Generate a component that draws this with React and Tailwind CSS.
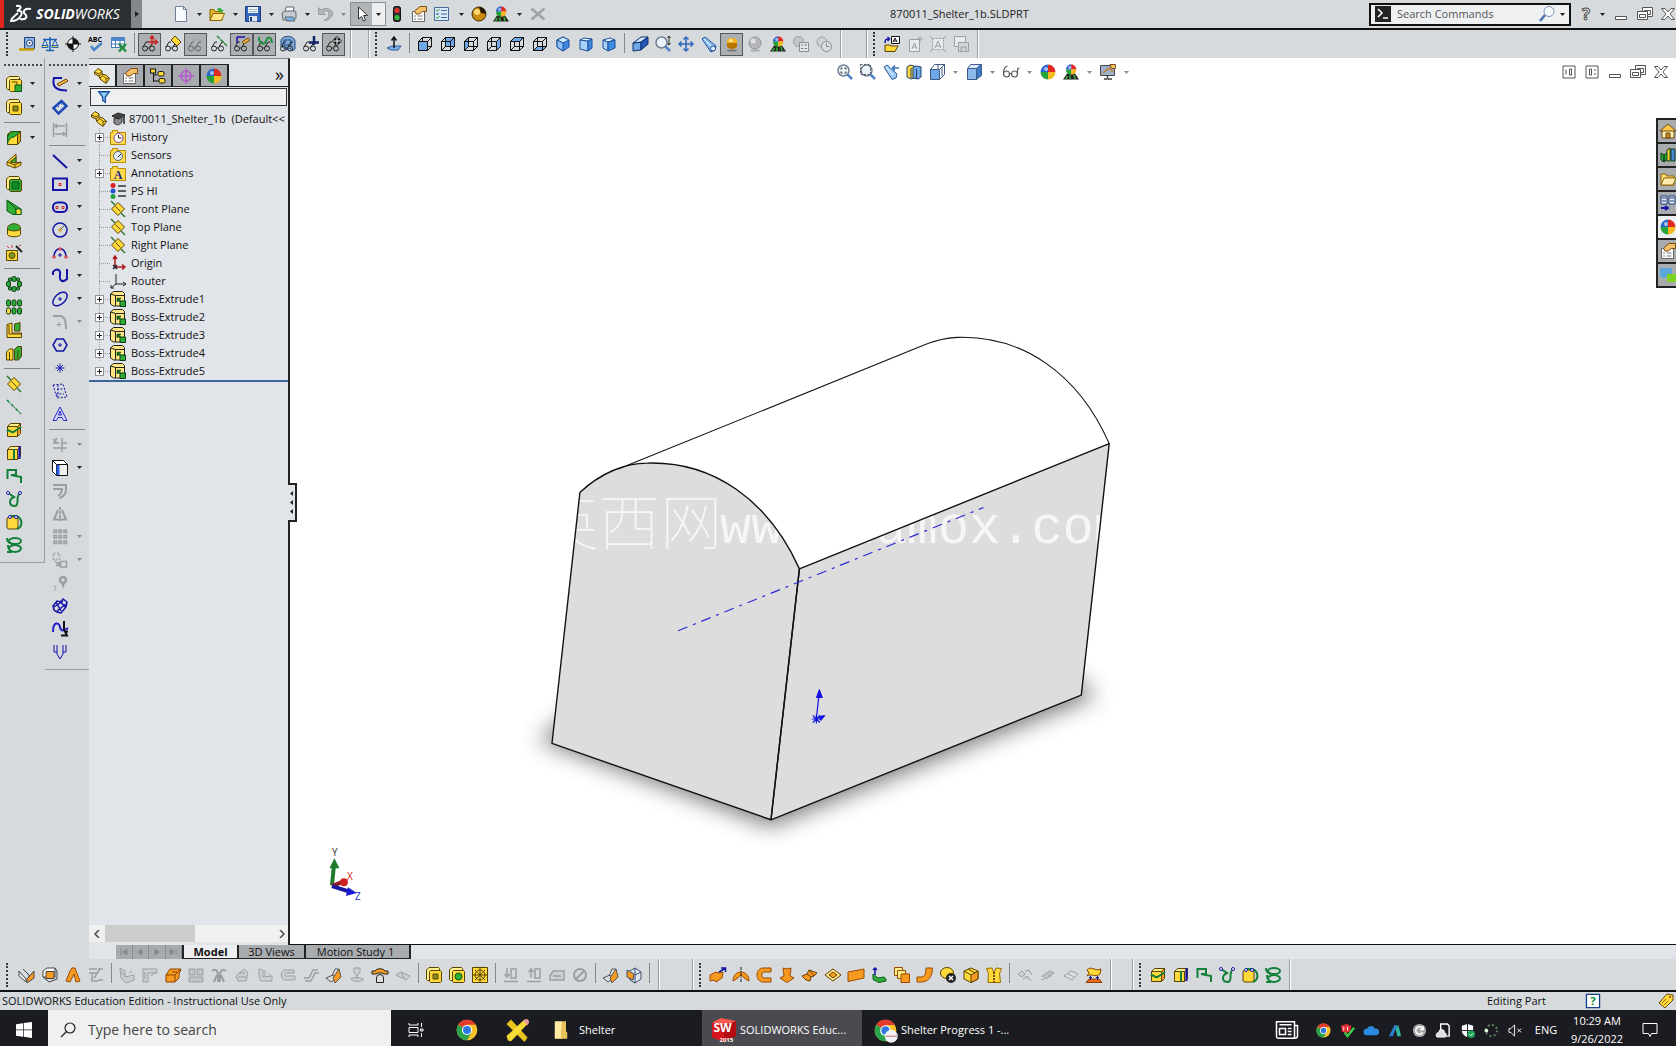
import { useState } from "react";

const Y = "#ffd83a";
const YL = "#fff08a";
const G = "#2fae35";
const DG = "#13803a";
const O = "#f79a1f";
const BR = "#5a4300";
const B = "#1414a8";
const GR = "#9b9fa3";
const BL = "#6ea8e6";

/* small shared shapes, all on a 16x16 grid */
const Box = ({ f = Y, t = YL, s = "#d9a800", k = BR }) => (
  <g stroke={k} strokeLinejoin="round">
    <path d="M1.5 4.5h10v10h-10z" fill={f} />
    <path d="M1.5 4.5l3-3h10l-3 3z" fill={t} />
    <path d="M14.5 1.5v10l-3 3v-10z" fill={s} />
  </g>
);

/* two stacked rounded plates, the base of most feature icons */
const Plates = ({ f = Y }) => (
  <g stroke={BR} strokeLinejoin="round">
    <path d="M.5 3L3 .5h9.500l1 1v9.500L11 13.500H1.500l-1-1z" fill={YL} />
    <path d="M3.500 4.500l1-1h10l1 1v10l-1 1h-10l-1-1z" fill={f} />
  </g>
);

const WireBox = ({ front = "none", top = "none", side = "none", back = "none", left = "none", bottom = "none" }) => (
  <g stroke="#111" strokeLinejoin="round">
    <path d="M5.5 1.5h9v9h-9z" fill={back} />
    <path d="M1.5 5.5l4-4v9l-4 4z" fill={left} />
    <path d="M1.5 14.5l4-4h9l-4 4z" fill={bottom} />
    <path d="M1.5 5.5h9v9h-9z" fill={front} />
    <path d="M1.5 5.5l4-4h9l-4 4z" fill={top} />
    <path d="M14.5 1.5v9l-4 4v-9z" fill={side} />
  </g>
);

const IsoBox = () => (
  <g stroke="#1d4f9c" strokeLinejoin="round">
    <path d="M8 1l6 3v7l-6 4-6-4V4z" fill="#3d8ae0" />
    <path d="M8 1l6 3-6 3-6-3z" fill="#cfe6ff" />
    <path d="M2 4l6 3v8l-6-4z" fill="#8fc3f7" />
  </g>
);

const Glasses = ({ c = "#222" }) => (
  <g fill="none" stroke={c}>
    <circle cx="3" cy="12.5" r="2.5" />
    <circle cx="10" cy="12.5" r="2.5" />
    <path d="M1 11l3-5h2M8 11l3-5h2M5.5 12h2" />
  </g>
);

const Ball = ({ gray }) => (
  <g>
    <path d="M8 8V.5A7.5 7.5 0 0 1 15.5 8z" fill={gray ? "#c6c8ca" : "#e02a20"} />
    <path d="M8 8h7.5A7.5 7.5 0 0 1 8 15.500z" fill={gray ? "#a9abad" : "#f5b921"} />
    <path d="M8 8v7.5A7.5 7.5 0 0 1 .5 8z" fill={gray ? "#c6c8ca" : "#25a338"} />
    <path d="M8 8H.5A7.5 7.5 0 0 1 8 .5z" fill={gray ? "#a9abad" : "#2b66cf"} />
    <circle cx="6" cy="5" r="2" fill="#fff" opacity=".6" />
  </g>
);

const Scene = () => (
  <g>
    <path d="M0 15.5l4-6h8l4 6z" fill="#222" />
    <path d="M2.5 15l2-3M7 15.500v-4M12 15l-1-4" stroke="#3fae3f" strokeWidth="1.5" />
    <g transform="translate(2.5 0) scale(.7)"><Ball /></g>
  </g>
);

const Magnifier = ({ c = "#6f7f95" }) => (
  <g fill="none">
    <circle cx="6.5" cy="6.5" r="5.5" stroke={c} strokeWidth="1.5" fill="#eef4fb" />
    <path d="M10.5 10.5l4.500 4.500" stroke="#4f86cc" strokeWidth="2.5" />
  </g>
);

const Plane = () => (
  <g>
    <path d="M1 0l4 4M11 12l4 4" stroke="#2b7a2b" strokeWidth="1.5" />
    <path d="M8 1.5L14.5 8 8 14.5 1.5 8z" fill={Y} stroke={BR} />
    <path d="M5.500 5.5l5 5" stroke={BR} />
  </g>
);

const Folder = ({ children }) => (
  <g>
    <path d="M.5 3.5h2v-2h5v2h8v12H.5z" fill="#ffdb4d" stroke="#b98b00" />
    {children}
  </g>
);

const Chrome = () => (
  <g>
    <circle cx="8" cy="8" r="7.5" fill="#f9c32b" />
    <path d="M8 8L1.5 4.25A7.5 7.5 0 0 1 14.5 4.25H8z" fill="#e33b2e" />
    <path d="M8 8L1.5 4.25A7.5 7.5 0 0 0 8 15.5l3.25-5.63z" fill="#2ba24c" />
    <circle cx="8" cy="8" r="3.7" fill="#fff" />
    <circle cx="8" cy="8" r="2.9" fill="#2f76e0" />
  </g>
);

const ICONS = {
  new: <g><path d="M2.5.5h8l3 3v12h-11z" fill="#f7fbff" stroke="#6b7f95" /><path d="M10.5.5v3h3" fill="none" stroke="#6b7f95" /></g>,
  open: <g><path d="M1 14.5v-11h4l1 2h7v9z" fill="#e5b52c" stroke="#8a6500" /><path d="M1 14.5l3-7h11.5l-3 7z" fill="#ffe58a" stroke="#8a6500" /><path d="M8 4c1-3 4-3 5 0h2l-3 3-3-3h2" fill="#31b03a" /></g>,
  save: <g><path d="M.5.5h15v15H.5z" fill="#3565bd" stroke="#173a80" /><path d="M3 1h10v6H3z" fill="#f2f6fb" /><path d="M4 3.5h8M4 5.5h8" stroke="#9bb" /><path d="M4 10h8v5.5H4z" fill="#dfe6ee" /><path d="M5 11h2v4H5z" fill="#173a80" /></g>,
  print: <g stroke="#5b6670"><path d="M4 6l1-5h8l-1 5z" fill="#fff" /><path d="M1 7l3-2h10l1 2v5l-3 2H2z" fill="#c6ccd2" /><path d="M4 11h8l2 4H6z" fill="#7db1e8" /></g>,
  undo: <path d="M1.5 1.5v7h7L6 6c3-2 6-1 6 2s-2 5-5 6.500c5-.5 8.500-3 8.500-7S9 .5 4 4z" fill="#b4b7ba" stroke="#999c9f" />,
  select: <path d="M4.5 1v12l3-2.500 2 4.500 2-1-2-4.500h4z" fill="#fff" stroke="#333" />,
  traffic: <g><rect x="4.500" y=".5" width="7" height="15" rx="2" fill="#333" stroke="#111" /><circle cx="8" cy="4.5" r="2.5" fill="#e33" /><circle cx="8" cy="11.5" r="2.5" fill="#2fbf3a" /></g>,
  options: <g><path d="M1.5 5.5h12v10h-12z" fill="#fff" stroke="#666" /><path d="M3 10h2M3 13h2M6.500 10h5M6.500 13h5" stroke="#777" /><path d="M3.500 5l5.500-4.500h6.500v5h-4L8 8H5z" fill="#f5c06a" stroke="#7b4f14" /></g>,
  list: <g><path d="M.5 1.5h14v13H.5z" fill="#dbe9f8" stroke="#486a94" /><path d="M7 4.5h6M7 8h6M7 11.5h6" stroke="#3f66a0" /><path d="M2 4l1.500 1.5L5.500 3M2 11l1.500 1.5L5.5 10" stroke="#2a9a35" fill="none" /><path d="M2.500 7h2v2h-2z" fill="#4a73b0" /></g>,
  goldball: <g><circle cx="8" cy="8" r="7" fill="#c98a10" stroke="#3b2a05" /><path d="M8 1a7 7 0 0 1 7 7l-5-1z" fill="#241804" /><circle cx="6" cy="6" r="3" fill="#ffd873" /></g>,
  scene: <Scene />,
  close: <path d="M1.5 2.5l13 11M14.5 2.5l-13 11" stroke="#9fa1a4" strokeWidth="2.5" />,

  measure: <g><path d="M5.5 1.5h10v11h-10z" fill="#8db5e3" stroke="#1d3f77" /><circle cx="10.5" cy="7" r="3" fill="#fff" stroke="#1d3f77" /><circle cx="10.5" cy="7" r="1" fill="#1d3f77" /><path d="M0 13.5h15" stroke="#caa000" strokeWidth="2.5" /></g>,
  mass: <g stroke="#1d62b5" fill="none"><path d="M8 1v13M4 14.5h8M1 3.5h14" strokeWidth="1.5" /><path d="M.5 9.5l2.500-6 2.500 6zM10.5 9.5l2.500-6 2.500 6z" /><path d="M0 9.500h6v2H0zM10 9.500h6v2h-6z" fill="#ffd24a" /></g>,
  section: <g><circle cx="8" cy="8" r="5.5" fill="#fff" stroke="#111" /><path d="M8 8V2.500A5.500 5.500 0 0 1 13.500 8zM8 8v5.500A5.500 5.500 0 0 1 2.500 8z" fill="#111" /><path d="M8 0v16M0 8h16" stroke="#111" /></g>,
  spell: <g><text x="0" y="6" fontSize="7" fontWeight="700" fontFamily="Open Sans, sans-serif">ABC</text><path d="M3 10l3 4 8-7" fill="none" stroke="#4b86cc" strokeWidth="2.5" /></g>,
  table: <g><path d="M.5 1.5h13v10H.5z" fill="#fff" stroke="#4a79b5" /><path d="M.5 1.500h13v3.500H.5z" fill="#4f8ad0" /><path d="M4.500 2v9M9 2v9M1 8h12" stroke="#4a79b5" /><path d="M8 8l7 7.500M15 8l-7 7.500" stroke="#1d8f38" strokeWidth="2.5" /></g>,
  gOrigin: <g><Glasses /><path d="M10 0v9M6 6h9M12.500 3.500l3 2.500-3 2.500M8 2.500L10 0l2 2.500" stroke="#c22" fill="none" strokeWidth="1.5" /></g>,
  gPlane: <g><Glasses /><path d="M10 0l6 6-4 4-6-6z" fill={Y} stroke={BR} /></g>,
  gCurve: <g><Glasses c="#666" /><path d="M4 6c3-5 7-4 10 1" stroke="#999" fill="none" strokeDasharray="2 1" /></g>,
  gAxis: <g><Glasses /><path d="M6 0l10 10" stroke="#2a8a3a" strokeWidth="1.5" strokeDasharray="4 1" /></g>,
  gSketch: <g><Glasses /><path d="M3 1h8M3 1v6" stroke={B} strokeWidth="1.5" fill="none" /><path d="M8 6l6-4 2 2-6 4z" fill="#f3b63c" stroke="#6d4510" /></g>,
  gSpline: <g><Glasses /><path d="M2 1c0 8 6 8 7 4s5-6 6 2" stroke="#1f8f3d" strokeWidth="2" fill="none" /></g>,
  gRoute: <g><path d="M1 4c2-5 13-5 14 1v8l-3 2-2-3-4 2-5-4z" fill="#7fa9d8" stroke="#234d84" /><path d="M4 4h7v5H4z" fill="none" stroke="#234d84" /><Glasses /></g>,
  gJoint: <g><Glasses /><path d="M11 0v9M6 6.500h10" stroke="#14246b" strokeWidth="2.5" /></g>,
  gMark: <g><Glasses /><path d="M11 0l5 5-5 5-5-5z" fill="#111" /><path d="M11 1v8M7 5h8" stroke="#fff" /></g>,

  normal: <g><path d="M1 12l5-2h9l-3 4H5z" fill="#7fb1ea" stroke="#2c5a9a" /><path d="M8 12V2M5.500 4.500L8 1l2.500 3.500" stroke="#111" fill="none" strokeWidth="1.5" /></g>,
  vFront: <WireBox front={BL} />,
  vBack: <WireBox back={BL} />,
  vLeft: <WireBox left={BL} />,
  vRight: <WireBox side={BL} />,
  vTop: <WireBox top={BL} />,
  vBottom: <WireBox bottom={BL} />,
  vIso: <IsoBox />,
  vTri: <g stroke="#1d4f9c"><path d="M2 4l8 1v10l-8-2z" fill="#a9d2fb" /><path d="M2 4l4-2 8 1-4 2z" fill="#e2f1ff" /><path d="M10 5l4-2v9l-4 3z" fill="#3d8ae0" /></g>,
  vDi: <g stroke="#1d4f9c"><path d="M2 4l5 2v9l-5-3z" fill="#a9d2fb" /><path d="M2 4l7-2 5 2-7 2z" fill="#e2f1ff" /><path d="M7 6l7-2v8l-7 3z" fill="#3d8ae0" /></g>,
  perspective: <g stroke="#0e2d6b"><path d="M1 7l8-1v8l-8 1z" fill="#6ea8e6" /><path d="M1 7l8-6h7l-7 5z" fill="#cfe4fb" /><path d="M16 1v7l-7 6V6z" fill="#2458b8" /></g>,
  zoomInOut: <g><Magnifier /><path d="M14 0v9M12.500 2L14 0l1.500 2M12.500 7L14 9l1.500-2" stroke="#333" fill="none" /></g>,
  pan: <path d="M8 1v14M1 8h14M5.500 3.500L8 1l2.500 2.500M5.500 12.500L8 15l2.500-2.500M3.500 5.500L1 8l2.500 2.500M12.500 5.500L15 8l-2.500 2.500" fill="none" stroke="#2f66c0" strokeWidth="1.5" />,
  torch: <g><path d="M1 3l3-2 11 9-1 4-4 2z" fill="#8fc3f7" stroke="#1d4f9c" /><path d="M3 3l8 8" stroke="#fff" /><circle cx="12" cy="12.500" r="2.5" fill="#dff0ff" stroke="#1d4f9c" /></g>,
  shaded: <g><rect x="3" y="2" width="10" height="9" rx="4" fill="#f4b321" /><path d="M3 7h10v3a5 3 0 0 1-10 0z" fill="#b87500" /><rect x="5" y="3" width="4" height="3" rx="1.5" fill="#ffe79a" /><ellipse cx="8" cy="14.500" rx="5" ry="1" fill="#777" /></g>,
  grayBall: <g><circle cx="8" cy="7" r="6" fill="#b4b6b9" stroke="#909396" /><circle cx="6" cy="5" r="2.5" fill="#dfe0e1" /><ellipse cx="8" cy="14.500" rx="5" ry="1" fill="#aaa" /></g>,
  copyBall: <g><circle cx="5.500" cy="5.500" r="5" fill="#c3c5c8" stroke={GR} /><path d="M6.5 6.5h9v9h-9z" fill="#e3e5e7" stroke="#8a8d90" /><path d="M8 9h2M8 12.500h2M11.500 9h2.500M11.500 12.500h2.500" stroke="#777" /></g>,
  pasteBall: <g><circle cx="6" cy="6" r="5" fill="#cfd1d3" stroke={GR} /><circle cx="10.5" cy="10.5" r="5" fill="#dcdee0" stroke="#8a8d90" /><path d="M10.500 7v3.500h3" stroke="#8a8d90" fill="none" /></g>,

  annOpen: <g><path d="M1 15.500V9h5l1 1h7l-3 5.500z" fill={Y} stroke={BR} /><path d="M7.500.5h8v7h-8z" fill="#fff" stroke="#111" /><path d="M9 6l2-4 2 4M9.500 5h3" stroke="#111" fill="none" /><path d="M1 7c0-4 1-4 4-4M3.500 1l2 2-2 2" fill="none" stroke={B} strokeWidth="1.5" /></g>,
  annNew: <g fill="none" stroke={GR}><path d="M2.500 3.500h10v12h-10z" fill="#e8eaec" /><path d="M5 13l2.500-6L10 13M6 11h3M13 0v6M10 3h6" /></g>,
  annGrid: <g fill="none" stroke={GR}><path d="M2.500 2.500h11v11h-11z" fill="#e8eaec" strokeDasharray="2 1" /><path d="M5 12l3-7 3 7M6 10h4M0 0l3 3M16 0l-3 3M0 16l3-3M16 16l-3-3" /></g>,
  annSave: <g fill="none" stroke={GR}><path d="M1.500.5h11v10h-11z" fill="#e8eaec" /><path d="M5.500 6.500h10v9h-10z" fill="#d2d5d8" /><path d="M8 15v-4h5v4" /></g>,

  hZoomFit: <g><Magnifier /><path d="M4 5.500V4h1.500M7.500 4H9v1.500M9 7.500V9H7.500M5.500 9H4V7.500" stroke="#333" fill="none" /></g>,
  hZoomArea: <g><Magnifier /><path d="M.5.5h10v10H.5z" fill="none" stroke="#555" strokeDasharray="2 1.500" /></g>,
  hPrev: <g><path d="M1 3l3-2 10 9-1 4-4 1.500z" fill="#9ccaf5" stroke="#2c5a9a" /><path d="M3 3l7 8" stroke="#fff" /><path d="M16 4h-6M12 1.500L9.500 4 12 6.500" stroke="#3b6fb8" fill="none" strokeWidth="1.5" /></g>,
  hSection: <g stroke="#20426f"><path d="M1 3l3-2 4 1v12l-3 1-4-2z" fill={Y} /><path d="M7 3l3-1 5 1v10l-3 2-5-1z" fill={BL} /><path d="M5 4v10M10.500 5v9" /></g>,
  hOrient: <g stroke="#3d5b86"><path d="M1.500 5.500h9v10h-9z" fill={BL} /><path d="M1.500 5.500l4-5h10l-5 5z" fill="#fff" /><path d="M15.500.5v10l-5 5v-10z" fill="#fff" /><path d="M9 1v4M13 3v9" /></g>,
  hStyle: <g stroke="#3d5b86"><path d="M1.5 4.5h9v11h-9z" fill="#8db8ea" /><path d="M1.500 4.500l3-4h11l-5 4z" fill="#d9eafc" /><path d="M15.500.5v11l-5 4v-11z" fill="#3f79c8" /></g>,
  hGlasses: <g fill="none" stroke="#555" strokeWidth="1.200"><circle cx="3.500" cy="10" r="3" /><circle cx="11.500" cy="10" r="3" /><path d="M.5 9c0-4 1-6 4-7M6.500 9.500h2M14.500 9c0-4 0-5 2-5" /></g>,
  hBall: <Ball />,
  hScene: <Scene />,
  hMonitor: <g><path d="M.5 1.500h14v10H.500z" fill="#9db4cc" stroke="#444" /><path d="M3 9l6-5 4 4" stroke="#c47c2c" fill="none" strokeWidth="1.5" /><path d="M7.500 12v2M4 15h8" stroke="#444" strokeWidth="1.5" /><path d="M10 .5h5.500v4h-4z" fill="#f5c06a" stroke="#7b4f14" /></g>,

  boss: <g><Plates /><path d="M9 9h6.500v6.500H9z" fill={G} stroke="#0b5a1a" /><path d="M6 6h5v3" fill="none" stroke={BR} /></g>,
  cut: <g><Plates /><path d="M7 7h5v5H7z" fill="#8a8a20" stroke={BR} /></g>,
  fillet: <g><Box /><path d="M1.5 14V9a7 7 0 0 1 7-7.500L14 2 8 7c-3 0-6 3-6.500 7z" fill={G} stroke="#0b5a1a" /></g>,
  rib: <g stroke={BR}><path d="M1 9l9-8v9l5-1v3l-6 3-8-3z" fill={Y} /><path d="M4 9l6-5v6z" fill={G} /><path d="M1 9l8 3 6-3M9 12v3" fill="none" /></g>,
  shell: <g><Plates f={G} /><path d="M6 6h7v7H6z" fill="#0e8a26" stroke="#0b5a1a" /></g>,
  draft: <g stroke="#0b5a1a"><path d="M1 1l14 9v5.500H7L1 12z" fill={G} /><path d="M1 1l9 9v5" fill="none" /><path d="M10 10h5v5.500h-5z" fill={Y} /></g>,
  dome: <g stroke={BR}><path d="M1.500 6v6.500c1 3 12 3 13 0V6z" fill={Y} /><path d="M1.500 7C1 0 15 0 14.500 7c-1 2.500-12 2.500-13 0z" fill={G} /></g>,
  wizard: <g><path d="M.5 5.500h11v10H.500z" fill={Y} stroke={BR} /><circle cx="6" cy="10.500" r="3" fill="#7b9a20" stroke={BR} /><path d="M10 1l6 6" stroke="#222" strokeWidth="2" /><path d="M1 1l2 2M6 0v3M13 1l2-1" stroke="#d33" /></g>,
  circPattern: <g fill={G} stroke="#0b3a14"><rect x="6" y=".5" width="4" height="5" rx="1.500" /><rect x="6" y="10.500" width="4" height="5" rx="1.500" /><rect x=".5" y="5.500" width="4" height="5" rx="1.500" /><rect x="11.500" y="5.500" width="4" height="5" rx="1.500" /><rect x="2.500" y="2" width="3" height="3" rx="1" /><rect x="10.500" y="2" width="3" height="3" rx="1" /><rect x="2.500" y="11" width="3" height="3" rx="1" /><rect x="10.500" y="11" width="3" height="3" rx="1" /></g>,
  linPattern: <g stroke="#0b3a14" fill={G}><rect x=".5" y="1" width="4" height="6" rx="1.500" /><rect x="6" y="1" width="4" height="6" rx="1.500" /><rect x="11.500" y="1" width="4" height="6" rx="1.500" /><rect x=".5" y="9" width="4" height="6" rx="1.500" fill={Y} /><rect x="6" y="9" width="4" height="6" rx="1.500" /><rect x="11.500" y="9" width="4" height="6" rx="1.500" /></g>,
  mirrorA: <g stroke={BR}><path d="M1 2.500l5-1.500v10h9.500v4.500H1z" fill={Y} /><path d="M8.500 2l5.500-1.500V9H8.500z" fill={G} /><path d="M3 3v9h12" fill="none" /></g>,
  mirrorB: <g stroke={BR}><path d="M.5 7l3-3h3.500v11H.5z" fill={Y} /><path d="M8.500 4.500l3-3h4v10l-3 3.500h-4z" fill={G} /><path d="M3.500 7v8M12 5v9" fill="none" /></g>,
  plane: <Plane />,
  axis: <path d="M1 1l14 14" stroke={DG} strokeWidth="1.5" strokeDasharray="3 1 1 1" />,
  splitLine: <g><Box s={O} /><path d="M1 9c3-3 4 4 8 0l6-4" stroke={DG} fill="none" strokeWidth="2" /></g>,
  projCurve: <g><Box s="#d9a0e0" /><path d="M8 4v10" stroke={DG} strokeWidth="2" /><path d="M13.5 1v13" stroke={B} strokeWidth="2" /></g>,
  compCurve: <path d="M1.500 11V2H10v5H5l10 2v6" fill="none" stroke={DG} strokeWidth="2" />,
  curveXYZ: <g><path d="M2 2l6 4c-6 3-5 9 1 9 5-1 0-9 5-13" fill="none" stroke={DG} strokeWidth="2" /><circle cx="2" cy="2" r="1.5" fill="#fff" stroke={B} /><circle cx="14" cy="2" r="1.5" fill="#fff" stroke={B} /></g>,
  curveRef: <g><rect x="1" y="3" width="11" height="12" rx="2" fill={Y} stroke={BR} /><path d="M4 2h6c7 2 7 11 1 13" fill="none" stroke={DG} strokeWidth="2" /><circle cx="4" cy="3" r="1.500" fill="#fff" stroke={B} /><circle cx="10" cy="3" r="1.500" fill="#fff" stroke={B} /></g>,
  helix: <g fill="none" stroke={DG} strokeWidth="2"><ellipse cx="9" cy="4" rx="6" ry="3" /><ellipse cx="9" cy="11.500" rx="6" ry="3.500" /><path d="M1 1c0 4 3 6 8 6M1 15h5M2 8c0 2 0 3 1 4" /></g>,

  sketch: <g><path d="M1 2h9M2 2c-2 8 1 12.500 13 12.500" fill="none" stroke={B} strokeWidth="2" /><path d="M5 8l9-5 2 2-9 5z" fill="#f3b63c" stroke="#6d4510" /></g>,
  dimension: <g><path d="M1.500 9l8-7 5 5-8 7.500z" fill="none" stroke="#1c49b5" strokeWidth="2.500" /><path d="M5 6l2 2M8 3.500l2 2" stroke="#1c49b5" /></g>,
  smartDim: <path d="M1.500 1v14M14.500 1v14M3 4h10M3 12h10M5 2L3 4l2 2M11 10l2 2-2 2" fill="none" stroke={GR} strokeWidth="1.5" />,
  line: <path d="M1 2l14 13" stroke={B} strokeWidth="2" />,
  rect: <g><path d="M1 2.500h14v11.500H1z" fill="none" stroke={B} strokeWidth="2" /><path d="M7 7.500h2v2H7z" fill="#fff" stroke="#c22" /></g>,
  slot: <g><rect x="1" y="3.500" width="14" height="9.500" rx="4.500" fill="none" stroke={B} strokeWidth="2" /><path d="M4 7.500h2v2H4zM10 7.500h2v2h-2z" fill="#fff" stroke="#c22" /></g>,
  circle: <g fill="none"><circle cx="8" cy="8" r="7" stroke={B} strokeWidth="1.5" /><path d="M8 8l5-5" stroke="#555" /><path d="M7 7h2v2H7z" stroke="#c90" /></g>,
  arc: <g fill="none"><path d="M2 12C2 1 14 1 14 12" stroke={B} strokeWidth="1.5" /><path d="M1 11h2v2H1zM13 11h2v2h-2zM7 3h2v2H7z" fill="#fff" stroke="#c22" /><path d="M8 8v4M6 10h4" stroke={B} /></g>,
  spline: <path d="M1 7V4c3-4 8-3 7 3s3 8 7 4V1" fill="none" stroke={B} strokeWidth="2" />,
  ellipse: <g fill="none" stroke={B}><ellipse cx="8" cy="8" rx="8.500" ry="5" transform="rotate(-42 8 8)" strokeWidth="1.5" /><path d="M8 6v4M6 8h4" /></g>,
  skFillet: <g fill="none" stroke={GR}><path d="M1 2h6c5 0 7 3 7 13" strokeWidth="2" /><path d="M7 8v5M4.500 10.500h5" /></g>,
  polygon: <g fill="none" stroke={B}><path d="M4.500 2h7l3.500 6-3.500 6h-7L1 8z" strokeWidth="1.5" /><path d="M8 6v4M6 8h4" /></g>,
  point: <path d="M8 3.500v9M3.500 8h9M5 5l6 6M11 5l-6 6" stroke={B} />,
  skPlane: <path d="M1 2l10-1 4 13-10 1zM5 6h8M4 11h8M6 2v12" fill="none" stroke={B} strokeDasharray="2 1.500" />,
  skText: <path d="M8 1l7 13.500h-3.500L10 11.500H6l-1.500 3H1zM8 5l-1.500 4h3z" fill="#d6d8f5" stroke="#2b2bc4" strokeLinejoin="round" />,
  trim: <path d="M1 11h14M1 6h6M9 6h6M10 1v14M1 2l4 4M5 1L2 5" stroke={GR} strokeWidth="1.500" fill="none" />,
  convert: <g stroke="#111"><path d="M4.500 4.500h11v11h-11z" fill="#eee" /><path d="M.5.5h11l4 4h-11z" fill="#fff" /><path d="M.5.500l4 4v11l-4-4z" fill="#fff" /><path d="M6 5v10" stroke="#2b5fe0" strokeWidth="3" /></g>,
  offset: <path d="M1 2h13v5c0 4-3 7-7 8M1 6h9c0 3-1 5-4 7" fill="none" stroke={GR} strokeWidth="2" />,
  mirror: <g fill="none" stroke={GR} strokeWidth="2"><path d="M8 1v14" strokeDasharray="3 1" /><path d="M6 4L2 13.500h12L10 4" /></g>,
  skPattern: <path d="M2 1h2.500v2.500H2zM7 1h2.500v2.500H7zM12 1h2.500v2.500H12zM2 6.500h2.500V9H2zM7 6.500h2.500V9H7zM12 6.500h2.500V9H12zM2 12h2.500v2.500H2zM7 12h2.500v2.500H7zM12 12h2.500v2.500H12z" fill="none" stroke={GR} strokeWidth="1.500" />,
  move: <g fill="none" stroke={GR} strokeWidth="1.5"><path d="M1.500 1.500h6v6h-6z" strokeDasharray="2 1.500" /><path d="M8.500 9.500h6v5.500h-6zM3 9l4 4M7 10v3.500H4" /></g>,
  relations: <g><circle cx="11" cy="5" r="3" fill="none" stroke={GR} strokeWidth="2.500" /><path d="M9 8l2 6 2-6z" fill={GR} /><path d="M1 12c3-3 4 3 1 3" stroke={GR} fill="none" /></g>,
  lattice: <path d="M1 8l4-5 4 1 2-3 4 3-1 5-5 6-4-1-3-2zM2 9l9-6M5 13l9-7M4 4l5 9M8 3l5 6" fill="none" stroke={B} strokeWidth="1.500" />,
  repair: <g fill="none" strokeWidth="2"><path d="M1 11C1 0 7 1 8 6s4 4 8 1" stroke="#2020c8" /><path d="M12 0v9M9 14.500h6l-2-4h3" stroke="#111" /></g>,
  quick: <path d="M5 1v9l3 5 3-5V1M2 1v7M14 1v7M2 8h3M11 8h3" fill="none" stroke={B} />,

  part: <g stroke={BR} strokeLinejoin="round"><path d="M.5 4L4 .5l4 2.500v3l4 1 3.500 3.500-3.500 5-6-4.500-1-3-4.500-2z" fill={Y} /><path d="M.5 4L5 6l3-2.500M5 8l3-2M6 10l3-2.500 3 3 3.500-.5M12 10.500v4.500" fill="none" /></g>,
  confTab: <g fill={Y} stroke="#111"><path d="M3.500 3v11M3.500 7H7M3.500 13H9" fill="none" /><rect x=".5" y="1" width="5" height="4" /><rect x="8" y="3.500" width="6" height="4.500" rx="1.500" /><rect x="9" y="10.500" width="6" height="4.500" rx="1.500" /></g>,
  dimTab: <g fill="none" stroke="#b75ad0" strokeWidth="1.5"><circle cx="8" cy="8" r="5" /><path d="M8 0v16M0 8h16" /></g>,
  funnel: <path d="M2 2h12L9.500 8v6l-3-2V8z" fill="#8fd0ff" stroke="#164a9a" strokeWidth="1.5" />,
  cap: <g><path d="M1 5l6-3 7 2-6 4z" fill="#444" stroke="#222" /><path d="M3 7v5c3 3 6 2 8-1V6L8 8z" fill="#8a8a8a" stroke="#333" /><path d="M13 5v8" stroke="#222" strokeWidth="1.5" /></g>,
  history: <Folder><circle cx="8.500" cy="9" r="4.500" fill="#fff" stroke="#7a3fb0" /><path d="M8.500 6v3h3" stroke="#222" fill="none" /></Folder>,
  sensors: <Folder><circle cx="8" cy="9" r="4.500" fill="#e6eef5" stroke="#567" /><path d="M8 10l3-3" stroke="#222" /></Folder>,
  annotations: <Folder><text x="8" y="14" textAnchor="middle" fontSize="12" fontWeight="700" fill="#14248c" fontFamily="Liberation Serif, serif">A</text></Folder>,
  ps: <g><circle cx="3" cy="2.500" r="2.500" fill="#e02020" /><circle cx="3" cy="8" r="2.500" fill="#2550d0" /><circle cx="3" cy="13.500" r="2.500" fill="#20a040" /><path d="M8 3h8M8 8h8M8 13h8" stroke="#333" strokeWidth="1.500" /></g>,
  origin: <g fill="none" stroke="#b01818" strokeWidth="1.5"><path d="M5 1v11h10M3 4l2-3 2 3M12 9.500l3 2.500-3 2.500" /><path d="M3 10l4 4M7 10l-4 4" stroke="#222" /></g>,
  router: <path d="M6 1v10h10M6 11l-5 4M13 9l3 2-3 2M1 12v3h3" fill="none" stroke="#222" />,
  feature: <g><path d="M.5 3L3.500.5h9l2 2v9l-2 3.500h-9l-3-2z" fill="#ffe680" stroke="#222" /><path d="M5.500 15V4.500h9M.5 3l5 1.500" fill="none" stroke="#222" /><path d="M10 10h5.500v5.500H10z" fill={G} stroke="#0b3a14" /><path d="M7.500 7.500l3 3M7.500 11V7.500H11" stroke="#0b5a1a" fill="none" strokeWidth="1.5" /></g>,

  smBase: <g stroke="#444"><path d="M0 4l7 8v3L0 9z" fill="#eee" /><path d="M4 2l6 6v4" fill="none" /><path d="M8 12l7-8v7l-7 5z" fill={O} /></g>,
  smConvert: <g stroke="#444"><path d="M1 4l4-3h8v9H1z" fill="#fff" /><path d="M4 4.500h8v7H4z" fill={O} /><path d="M1 10l6 5 8-3V4l-2-3" fill="none" /></g>,
  smLoft: <g stroke="#9a4a00"><path d="M5 4l2-3h3l1 3 4 10-4 1-1-4-1-4-2 4-2 4-4-1z" fill={O} /></g>,
  smGrayA: <path d="M1 2h8M1 6h9M4 6v8h6M12 2l-6 9M10 2h5M10 13h5" stroke={GR} fill="none" strokeWidth="1.500" />,
  smEdge: <path d="M1 1l5 3v6l9-2v5l-8 3-5-5zM2 5l4 3M10 6l3-2" stroke={GR} fill="#ccd0d3" />,
  smMiter: <path d="M1 2h14v4H6v9H1zM9 9l5-4M3 5v7" stroke={GR} fill="#ccd0d3" />,
  smHem: <g stroke="#8a4200"><path d="M1 8l4-6h11l-2 5v4l-4 4H1z" fill={O} /><path d="M1 8h9l5-5M10 8v7M7 5h5" fill="none" /></g>,
  smJog: <path d="M1 2h6v6H1zM9 2h6v6H9zM1 10h14v5H1z" stroke={GR} fill="#bfc3c6" />,
  smSketch: <path d="M1 4c3-3 6 0 6 4v7M15 4c-3-3-6 0-6 4v7M3 15l3-7M13 15l-3-7" stroke={GR} fill="none" strokeWidth="2" />,
  smCross: <path d="M2 9l8-7 4 4-2 8H4zM4 10h8M5 6h6" stroke={GR} fill="#ccd0d3" />,
  smCorner: <path d="M2 2l4 1v7l9-1v5H4l-2-4zM8 3v6M11 6l3 3" stroke={GR} fill="#ccd0d3" />,
  smClose: <path d="M14 3H5C0 3 0 13 5 13h10V9H6c-2 0-2-3 0-3h8z" stroke={GR} fill="#ccd0d3" />,
  smBend: <path d="M1 11h5l4-8h5M2 14h6l4-8h4" stroke={GR} fill="none" strokeWidth="1.500" />,
  smTab: <g stroke="#555"><path d="M0 11l7-3 3 4-5 3z" fill="#ddd" /><path d="M7 11l6-9 2 8-6 6z" fill={O} /><path d="M6 9l3-7 4 0" fill="none" /></g>,
  smPunch: <path d="M5 1h6v4L8 9 5 5zM8 9v3M2 12c2-2 10-2 12 0s-10 4-12 0z" stroke={GR} fill="#ccd0d3" />,
  smForm: <g stroke="#222"><path d="M0 4h3c2-3 8-3 10 0h3v3h-4l-2-1H6L4 7H0z" fill={O} /><path d="M4.500 15.500V11a3.500 3.500 0 0 1 7 0v4.500z" fill="#ddd" /></g>,
  smVent: <path d="M1 8l5-3 9 4-4 4zM6 5l3 6" stroke={GR} fill="#ccd0d3" />,
  simpleHole: <g><Plates /><circle cx="9.500" cy="9.500" r="3.500" fill={G} stroke="#0b5a1a" /></g>,
  vent: <g><path d="M.5.5h15v15H.5z" fill={Y} stroke={BR} /><circle cx="8" cy="8" r="5" fill="none" stroke={BR} /><path d="M8 1v14M1 8h14M3 3l10 10M13 3L3 13" stroke={BR} /></g>,
  unfold: <path d="M4 1v9M1.500 7L4 10l2.500-3M1 14.500h14M8 2h5v9H8z" stroke={GR} fill="none" strokeWidth="1.500" />,
  fold: <path d="M5 11V2M2.500 5L5 2l2.500 3M1 14.500h14M9 2h5v9H9z" stroke={GR} fill="none" strokeWidth="1.500" />,
  flatten: <path d="M1 9l3-5h11v9H1zM4 9h8" stroke={GR} fill="#ccd0d3" strokeWidth="1.500" />,
  noBend: <g fill="none" stroke={GR} strokeWidth="2"><circle cx="8" cy="8" r="6" /><path d="M4 12l8-8" /></g>,
  rip: <g stroke="#3d4c66"><path d="M2 5l7-4 6 4v7l-6 4-5-3z" fill="#dfe8f5" /><path d="M9 1v7l6-3M9 8v8" fill="none" /><path d="M1 3l7 4-1 6-6-3z" fill={O} /></g>,

  sExtrude: <g><path d="M0 8l6-3 3 1 4-1-1 6-6 4-2-2-4 1z" fill={O} stroke="#9a4a00" /><path d="M9 5l6-3.500M11 1h4.500v4" stroke={B} fill="none" strokeWidth="1.500" /></g>,
  sRevolve: <g><path d="M0 14C0 2 16 2 16 14l-5-3c-1-3-5-3-6 0z" fill={O} stroke="#9a4a00" /><path d="M8 0v16" stroke="#111" strokeDasharray="3 1 1 1" /></g>,
  sSweep: <path d="M15 1H7C-1 1-1 15 7 15h8v-4H8c-3 0-3-6 0-6h7z" fill={O} stroke="#9a4a00" />,
  sLoft: <path d="M4 1l4 1 4-1-1 8 4 2-7 4.500L1 11l4-2z" fill={O} stroke="#9a4a00" />,
  sBoundary: <path d="M0 9l5-2 2-4 3 1 5 2-3 3-3 1-1 4-4-1zM5 7l4 3M7 3l5 6" fill={O} stroke="#6b3a00" />,
  sFilled: <g stroke="#6b3a00"><path d="M8 2l8 6-8 6-8-6z" fill={YL} /><path d="M8 5l4 3-4 3-4-3z" fill={O} /></g>,
  sPlanar: <path d="M0 5l16-3v9L0 14.500z" fill={O} stroke="#9a4a00" />,
  sOffset: <g><path d="M2 7l5 4 6-1 2 2v2l-7 1.500-6-3z" fill={G} stroke="#0b5a1a" /><path d="M4 8V1M2 3l2-2 2 2" stroke={B} fill="none" strokeWidth="1.500" /></g>,
  sRuled: <g stroke="#9a4a00"><path d="M.5.5h8v8h-8z" fill={YL} /><path d="M3.500 3.500h8v8h-8z" fill={YL} /><path d="M7 7h8.500v8.500H7z" fill={O} /></g>,
  sRadiate: <path d="M0 10h4c4 0 5-4 5-9h6.500c0 9-5 14-11 14H0z" fill={O} stroke="#9a4a00" />,
  sDelete: <g><ellipse cx="7" cy="6" rx="6.500" ry="5.500" fill={Y} stroke={BR} /><circle cx="11" cy="11" r="5" fill="#222" /><path d="M9 9l4 4M13 9l-4 4" stroke="#fff" strokeWidth="1.500" /></g>,
  sKnit: <g stroke={BR}><path d="M1 4l7-3 7 3v8l-7 3.500L1 12z" fill={Y} /><path d="M8 8l7-4v8l-7 3.500z" fill={O} /><path d="M1 4l7 4M5 2l7 4" fill="none" /></g>,
  sZip: <g><path d="M.5 1.500L6 1l2 5 2-5 5.500.5-2 5 1 9H2l.5-9z" fill={Y} stroke="#9a6a00" /><path d="M8 5v10" stroke="#7b4f00" strokeDasharray="2 1" strokeWidth="2" /></g>,
  sGrayA: <path d="M1 7l4-3 3 3-3 3zM6 12l4-3 4 5M8 4l4-1 3 5" stroke={GR} fill="#ccd0d3" />,
  sGrayB: <path d="M2 9l8-5 4 2-8 6zM1 12l3 1M8 8l3 2" stroke={GR} fill="#bfc3c6" />,
  sGrayC: <path d="M1 9l7-5 7 3-6 6zM5 7l6 3" stroke={GR} fill="#dcdee0" />,
  sWrap: <g><path d="M1 3c4-5 8 2 14-1l-1 5c-5 4-8-1-13 2l2-3z" fill={Y} stroke="#8a4200" /><path d="M0 15.500h16L13 12H3z" fill="#f06a1f" stroke="#8a4200" /><path d="M4.500 9v4M3 10.500h3M11.500 9v4M10 10.500h3" stroke={B} /></g>,

  home: <g stroke="#6d4510"><path d="M2 8v7h12V8" fill="#fff2b0" /><path d="M0 8l8-7 8 7z" fill="#ffc94d" /><path d="M6 10h4v5H6z" fill="#c8861a" /></g>,
  library: <g stroke="#0b3a14"><path d="M1 6l3 2v7l-3-2zM4 8l4-3v7l-4 3z" fill={G} /><path d="M7 3l3-2v13H7z" fill={Y} /><path d="M11 2h4v12h-4z" fill="#4a86d8" /></g>,
  folder: <g stroke="#8a6500"><path d="M1 14V3h5l1 2h7v9z" fill="#ffd873" /><path d="M1 14l3-7h12l-3 7z" fill="#ffedb0" /></g>,
  palette: <g><path d="M1 1h6v8H1zM9 1h6v8H9z" fill="#eef" stroke="#1d3f77" /><path d="M2 3h4M2 6h4M10 3h4M10 6h4" stroke="#1d3f77" /><path d="M1 13h6M5 11l3 2-3 2" stroke={B} fill="none" strokeWidth="2" /></g>,
  forum: <g><path d="M0 1h12v9H5l-2 3v-3H0z" fill="#5ca7dd" /><path d="M7 7h9v8H7z" fill="#7ed321" /></g>,

  help: <g><path d="M.5.5h15v15H.5z" fill="#fff" stroke="#14408a" strokeWidth="1.500" /><text x="8" y="13" textAnchor="middle" fontSize="13" fontWeight="700" fill="#128a3a" fontFamily="Open Sans, sans-serif">?</text></g>,
  tag: <g><path d="M1 10l8-9 6 1v5l-8 8z" fill={Y} stroke="#6d4510" /><circle cx="12" cy="4" r="1" fill="#6d4510" /><path d="M4 10l4-4M6 12l4-4" stroke="#9a6a00" /></g>,

  chrome: <Chrome />,
  pencils: <g><path d="M4 1l11 12-2 3L1 4z" fill="#e8c31c" /><path d="M13 1L1 12l1 3 2 .5L15 4z" fill="#f6dc35" /><path d="M12 2l3 3 1-2c0-2-1-3-3-2z" fill="#e79a9a" /></g>,
  winFolder: <g><path d="M3 1h6v14H3z" fill="#ffeaa3" /><path d="M9 1h3v8l1 1v5H8V9z" fill="#e9c35c" /></g>,
  solid: <g><path d="M0 3l6-3 10 2-5 3z" fill="#ff5a52" /><path d="M0 3l8 2v11l-8-3z" fill="#d5161c" /><path d="M8 5l8-3v10l-8 4z" fill="#b30d13" /><text x="1" y="9" fontSize="8" fontWeight="700" fill="#fff" fontFamily="Open Sans, sans-serif">SW</text><text x="5" y="16" fontSize="4" fontWeight="700" fill="#fff" fontFamily="Open Sans, sans-serif">2015</text></g>,
  chromeUser: <g><Chrome /><circle cx="12" cy="12" r="4.500" fill="#f1f3f6" /><path d="M8 12h8" stroke="#c99" /></g>,
  pdm: <g><path d="M1 3l6-2 5 2-1 6-5 2-4-2z" fill="#e02a33" /><path d="M4 4v4M8 4v4" stroke="#fff" /><path d="M5 10l3 4 7-9" stroke="#3ccc4a" fill="none" strokeWidth="2.500" /></g>,
  cloud: <path d="M3 13a3.500 3.500 0 0 1 0-7 5 5 0 0 1 9 0 3.500 3.500 0 0 1 1 7z" fill="#2a8be0" />,
  autodesk: <g><path d="M1 14L7 2h3L5 14z" fill="#2a7fd4" /><path d="M8 6l3-4 3 12h-4z" fill="#35b6a0" /></g>,
  sync: <g><circle cx="8" cy="8" r="7" fill="#a8a8a8" /><path d="M11.500 6A4 4 0 1 0 11.500 10M12 3.500V7H8.500" fill="none" stroke="#fff" strokeWidth="1.500" /></g>,
  device: <g fill="none" stroke="#fff"><path d="M5 8V1h7l2 2v11h-3" strokeWidth="1.500" /><path d="M1 15h9a3 3 0 0 0-1-5 3 3 0 0 0-6 0 3 3 0 0 0-2 5z" fill="#ddd" /></g>,
  shield: <g><path d="M8 1l6 2v5c0 4-3 6-6 7-3-1-6-3-6-7V3z" fill="#fff" /><path d="M8 1v14M2 8h12" stroke="#1c1c22" /><circle cx="12" cy="12" r="4" fill="#18a558" /><path d="M10 12l1.500 1.500L14 11" stroke="#fff" fill="none" /></g>,
  spinner: <g><circle cx="8" cy="8" r="6" fill="none" stroke="#5f8a5f" strokeWidth="2" strokeDasharray="2 2.700" /><circle cx="2.500" cy="8" r="2" fill="#e8ffe8" /></g>,
  mute: <path d="M1 6v4h2l4 4V2L3 6zM10 6l4 4M14 6l-4 4" fill="none" stroke="#fff" />,
  news: <g fill="none" stroke="#fff"><path d="M1 2.500h12v11H2.500C1 13.500 1 13 1 12zM13 5h2v7c0 1-1 1.500-2 1.500" /><path d="M3 7h4v4H3zM3 4.500h8M8.500 7H11M8.500 9H11M8.500 11H11" /></g>,
  taskview: <path d="M1 1v2h9V1M1 5.500h9v5H1zM1 15v-2h9v2M13.500 1v4M13.500 11v4M12.500 7h2.500v2h-2.500z" fill="none" stroke="#fff" />,
  bell: <path d="M1 1.500h14v10H9.500L8 14.500 6.500 11.500H1z" fill="none" stroke="#fff" />,
  winLogo: <path d="M0 2.200l7-1v6.300H0zM7.700 1.100L16 0v7.500H7.700zM0 8.300h7v6.400l-7-1zM7.700 8.300H16V16l-8.300-1.200z" fill="#fff" />,
  lens: <g fill="none" stroke="#222" strokeWidth="1.200"><circle cx="10" cy="6" r="5" /><path d="M6.500 9.500L1 15" /></g>,
  prompt: <g><path d="M0 0h16v16H0z" fill="#222" /><path d="M3 3l4 4-4 4M8 12h5" stroke="#fff" fill="none" strokeWidth="1.500" /></g>,
  searchLens: <g><path d="M6 9l-5 6" stroke="#4b74ad" strokeWidth="2.500" /><circle cx="10" cy="5.500" r="5" fill="#f5faff" stroke="#7d92ad" /></g>,
  question: <text x="8" y="14" textAnchor="middle" fontSize="16" fontWeight="700" fill="#fff" stroke="#444" fontFamily="Open Sans, sans-serif">?</text>,
  winMin: <path d="M2.500 10.500h11v3h-11z" fill="#fff" stroke="#555" />,
  winRestore: <g fill="#fff" stroke="#555"><path d="M5.500 1.500h10v9h-10z" /><path d="M7.500 4.500h6v4h-6z" /><path d="M.5 5.500h10v8H.500z" /><path d="M2.500 8.500h6v3h-6z" /></g>,
  winClose: <path d="M1.500 2.500h3.500L8 6l3-3.500h3.500L10 8l4.500 5.500H11L8 10l-3 3.500H1.500L6 8z" fill="#fff" stroke="#555" />,
  paneLeft: <g fill="#fff" stroke="#555"><path d="M2 2h12v12H2z" /><path d="M5 5.500v5M8.500 5v6h2V5z" /></g>,
  paneRight: <g fill="#fff" stroke="#555"><path d="M2 2h12v12H2z" /><path d="M5.500 5v6h2V5zM11 5v2M11 9v2" /></g>,
};

function Icon({ name, className = "size-4" }) {
  return (
    <svg viewBox="0 0 16 16" className={`${className} shrink-0 overflow-visible`} aria-hidden="true">
      {ICONS[name]}
    </svg>
  );
}

const Caret = ({ dim }) => (
  <svg viewBox="0 0 5 3" className="w-[5px] h-[3px]" aria-hidden="true">
    <path d="M0 0h5L2.500 3z" fill={dim ? "#8a8d90" : "#222"} />
  </svg>
);

const MenuButton = ({ name, dim, className = "w-3.5 h-5.5" }) => (
  <button type="button" aria-label={`${name} menu`} className={`${className} flex items-center justify-center shrink-0`}>
    <Caret dim={dim} />
  </button>
);

function Tool({ name, pressed, className = "w-[23px] h-[23px]" }) {
  return (
    <button
      type="button"
      aria-label={name}
      className={`${className} flex items-center justify-center shrink-0 ${pressed ? "bg-[#adb0b3] border border-[#55585b]" : ""}`}
    >
      <Icon name={name} />
    </button>
  );
}

const Sep = () => <span className="w-2 shrink-0 flex justify-center"><span className="w-px h-5 bg-[#85888b]" /></span>;
const Grip = () => <span className="w-0.5 h-6 shrink-0 border-l-2 border-dotted border-[#33363a]" />;
const Edge = () => <span className="w-0.5 self-stretch shrink-0 bg-[#9c9fa2] border-r border-white" />;

// "|" is a separator, a leading "!" is a pressed button
function ToolGroup({ items }) {
  return items.map((item, i) =>
    item === "|" ? <Sep key={i} /> : <Tool key={i} name={item.replace("!", "")} pressed={item.startsWith("!")} />
  );
}

// "name>" has a menu arrow, "name>-" a disabled one
function ToolColumn({ items, iconWidth }) {
  return items.map((item, i) => {
    if (item === "|") return <div key={i} className="h-2 w-full flex items-center"><div className="h-px w-9 mx-auto bg-[#85888b]" /></div>;
    const name = item.split(">")[0];
    return (
      <div key={i} className="flex items-center">
        <Tool name={name} className={`${iconWidth} h-[23px]`} />
        {item.includes(">") && <MenuButton name={name} dim={item.endsWith("-")} className="w-2 h-5.5" />}
      </div>
    );
  });
}

const VIEW_BAR_A = ["measure", "mass", "section", "spell", "table", "|", "!gOrigin", "gPlane", "!gCurve", "gAxis", "!gSketch", "!gSpline", "gRoute", "gJoint", "!gMark"];
const VIEW_BAR_B = ["normal", "|", "vFront", "vBack", "vLeft", "vRight", "vTop", "vBottom", "vIso", "vTri", "vDi", "|", "perspective", "zoomInOut", "pan", "torch", "!shaded", "grayBall", "scene", "copyBall", "pasteBall"];
const VIEW_BAR_C = ["annOpen", "annNew", "annGrid", "annSave"];
const FEATURES = ["boss>", "cut>", "|", "fillet>", "rib", "shell", "draft", "dome", "wizard", "|", "circPattern", "linPattern", "mirrorA", "mirrorB", "|", "plane", "axis", "splitLine", "projCurve", "compCurve", "curveXYZ", "curveRef", "helix"];
const SKETCH = ["sketch>", "dimension>", "smartDim", "|", "line>", "rect>", "slot>", "circle>", "arc>", "spline>", "ellipse>", "skFillet>-", "polygon", "point", "skPlane", "skText", "|", "trim>-", "convert>", "offset", "mirror", "skPattern>-", "move>-", "relations", "lattice", "repair", "quick"];
const SHEET_BAR = ["smBase", "smConvert", "smLoft", "smGrayA", "|", "smEdge", "smMiter", "smHem", "smJog", "smSketch", "smCross", "smCorner", "smClose", "smBend", "smTab", "smPunch", "smForm", "smVent", "|", "cut", "simpleHole", "vent", "|", "unfold", "fold", "flatten", "noBend", "|", "smTab", "rip", "|"];
const SURFACE_BAR = ["sExtrude", "sRevolve", "sSweep", "sLoft", "sBoundary", "sFilled", "sPlanar", "sOffset", "sRuled", "sRadiate", "sDelete", "sKnit", "sZip", "|", "sGrayA", "sGrayB", "sGrayC", "sWrap"];
const CURVE_BAR = ["splitLine", "projCurve", "compCurve", "curveXYZ", "curveRef", "helix"];

const TREE = [
  ["History", "history", true],
  ["Sensors", "sensors"],
  ["Annotations", "annotations", true],
  ["PS HI", "ps"],
  ["Front Plane", "plane"],
  ["Top Plane", "plane"],
  ["Right Plane", "plane"],
  ["Origin", "origin"],
  ["Router", "router"],
  ["Boss-Extrude1", "feature", true],
  ["Boss-Extrude2", "feature", true],
  ["Boss-Extrude3", "feature", true],
  ["Boss-Extrude4", "feature", true],
  ["Boss-Extrude5", "feature", true],
];

function TitleBar() {
  return (
    <header className="h-[30px] shrink-0 flex items-center bg-[#d6dadd] border-b-2 border-[#111]">
      <div className="w-[131px] h-full shrink-0 flex items-center gap-1 bg-[#2b3034] border-l-4 border-[#e1251b] pl-1.5 text-white">
        <svg viewBox="0 0 22 20" className="w-[22px] h-5" aria-hidden="true" fill="none" stroke="#fff" strokeWidth="2">
          <path d="M6 2c6-1 6 2 1 5 5-1 6 2 3 6-2 3-5 4-9 4 1-4 4-5 7-8M21 5c-6-1-9 2-6 5s1 6-5 5" />
        </svg>
        <span className="text-sm leading-none italic"><b>SOLID</b>WORKS</span>
      </div>
      <button type="button" aria-label="Show menu" className="w-[11px] h-full shrink-0 bg-[#85888b] flex items-center justify-center">
        <svg viewBox="0 0 4 6" className="w-1 h-1.5"><path d="M0 0l4 3-4 3z" fill="#222" /></svg>
      </button>
      <div className="flex items-center pl-7">
        {["new", "open", "save", "print", "undo"].map((n) => (
          <div key={n} className="flex">
            <Tool name={n} className="w-5.5 h-5.5" />
            <MenuButton name={n} dim={n === "undo"} />
          </div>
        ))}
        <div className="flex border border-[#8b8e91] bg-[#eceef0]">
          <Tool name="select" className="w-[21px] h-5.5 bg-[#b1b4b7]" />
          <MenuButton name="select" className="w-[13px] h-5.5" />
        </div>
        <Tool name="traffic" className="w-5.5 h-5.5" />
        <Tool name="options" className="w-5.5 h-5.5" />
        <Tool name="list" className="w-6 h-5.5" />
        <MenuButton name="list" />
        <Tool name="goldball" className="w-5.5 h-5.5" />
        <Tool name="scene" className="w-5.5 h-5.5" />
        <MenuButton name="scene" />
        <Tool name="close" className="w-6 h-5.5" />
      </div>
      <h1 className="flex-1 text-center text-[11px] leading-4 text-[#222]">870011_Shelter_1b.SLDPRT</h1>
      <label className="w-[202px] h-[23px] mr-1.5 shrink-0 flex items-center border-2 border-[#111] bg-[#eef0f2] pl-1">
        <Icon name="prompt" className="size-4" />
        <input aria-label="Search Commands" placeholder="Search Commands" className="flex-1 min-w-0 bg-transparent pl-1.5 text-[11px] placeholder:text-[#555] outline-none" />
        <Icon name="searchLens" />
        <MenuButton name="search" />
      </label>
      <Tool name="question" className="w-[18px] h-5.5" />
      <MenuButton name="question" />
      <div className="flex shrink-0 -mr-1">
        <Tool name="winMin" className="w-6 h-5.5" />
        <Tool name="winRestore" className="w-[23px] h-5.5" />
        <Tool name="winClose" className="w-6 h-5.5" />
      </div>
    </header>
  );
}

function FeatureTree() {
  const [tab, setTab] = useState("part");
  return (
    <aside className="w-[201px] shrink-0 flex flex-col bg-[#e1e5e9] border-r-2 border-[#222] border-t border-t-[#85888b] relative">
      <div className="h-[28px] shrink-0 flex items-end border-b border-[#222] pt-1">
        {["part", "options", "confTab", "dimTab", "hBall"].map((t) => (
          <button
            key={t}
            type="button"
            aria-label={t}
            onClick={() => setTab(t)}
            className={`w-7 h-[22px] flex items-center justify-center border-t border-r-2 border-[#222] ${t === tab ? "bg-[#e6e9ec]" : "bg-[#a7aaae]"}`}
          >
            <Icon name={t} />
          </button>
        ))}
        <button type="button" aria-label="More" className="ml-auto mr-1 text-lg leading-6">»</button>
      </div>
      <label className="h-[18px] mt-px mx-px shrink-0 flex items-center bg-[#eff0f1] border border-[#333] pl-1.5">
        <Icon name="funnel" className="size-3.5" />
        <input aria-label="Filter" className="flex-1 min-w-0 bg-transparent text-[11px] outline-none" />
      </label>
      <div className="mt-1 h-[18px] shrink-0 flex items-center gap-0.5 pl-0.5 text-[11px] whitespace-nowrap overflow-hidden">
        <Icon name="part" />
        <Icon name="cap" className="size-4 ml-0.5" />
        <span className="whitespace-pre">870011_Shelter_1b  (Default&lt;&lt;</span>
      </div>
      <ul className="border-b-2 border-[#3a669c]">
        {TREE.map(([label, icon, open], i) => (
          <li key={label} className="h-[18px] flex items-center text-[11px]">
            <span className={`ml-2.5 w-[11px] self-stretch relative flex items-center ${i < 13 ? "bg-[linear-gradient(#999_50%,transparent_50%)] bg-[length:1px_2px] bg-repeat-y" : ""}`}>
              <span className="w-full border-t border-dotted border-[#999]" />
              {open && (
                <button type="button" aria-label={`Expand ${label}`} className="absolute -left-1 w-[9px] h-[9px] bg-white border border-[#8f959b] flex items-center justify-center">
                  <svg viewBox="0 0 5 5" className="w-[5px] h-[5px]"><path d="M0 2.500h5M2.500 0v5" stroke="#222" /></svg>
                </button>
              )}
            </span>
            <Icon name={icon} />
            <span className="pl-[5px]">{label}</span>
          </li>
        ))}
      </ul>
      <div className="mt-auto h-[17px] mb-[3px] shrink-0 flex items-center bg-[#f0f0f0]">
        <button type="button" aria-label="Scroll left" className="w-4 flex justify-center">
          <svg viewBox="0 0 6 8" className="w-1.5 h-2"><path d="M5 0L1 4l4 4" fill="none" stroke="#444" strokeWidth="1.500" /></svg>
        </button>
        <span className="w-[90px] h-full bg-[#cdcdcd]" />
        <button type="button" aria-label="Scroll right" className="w-3 ml-auto flex justify-center">
          <svg viewBox="0 0 6 8" className="w-1.5 h-2"><path d="M1 0l4 4-4 4" fill="none" stroke="#444" strokeWidth="1.500" /></svg>
        </button>
      </div>
      <button type="button" aria-label="Collapse panel" className="absolute left-full top-[424px] w-[9px] h-[39px] z-10 bg-[#e1e5e9] border-2 border-l-0 border-[#222] flex flex-col items-center justify-around py-1">
        {[0, 1, 2].map((i) => (
          <svg key={i} viewBox="0 0 3 5" className="w-[3px] h-[5px]"><path d="M3 0v5L0 2.500z" fill="#222" /></svg>
        ))}
      </button>
    </aside>
  );
}

const FRONT = "M579.500 493.500C600 474 625 464 647 464C712 462 768 500 799.500 570L771 821.500 551.500 745z";

function Model() {
  return (
    <svg viewBox="291 58 1385 888" className="w-full h-full block" role="img" aria-label="Shelter model">
      <defs>
        <filter id="soft" x="-15%" y="-15%" width="130%" height="140%"><feGaussianBlur stdDeviation="11" /></filter>
      </defs>
      <path d="M538 742L771 828 1098 697 1060 670 600 690z" fill="#5c5c5c" opacity=".8" filter="url(#soft)" />
      <path d="M579.500 493.500C600 474 618 470 625 467L936 341.500 958 338C1023 336 1079 374 1110 444.500L799.500 570z" fill="#fff" />
      <path d={FRONT} fill="#ddd" />
      <path d="M799.500 570L1110 444.500 1082 696.500 771 821.500z" fill="#ddd" />
      <g fill="#fff" opacity=".75">
        <text x="536" y="546" fontSize="62" fontWeight="100" fontFamily="'Noto Sans CJK SC', sans-serif">英西网</text>
        <text x="720" y="544" fontSize="52" fontFamily="'Liberation Mono', monospace">www.damox.com</text>
      </g>
      <g fill="none" stroke="#111" strokeWidth="1.400" strokeLinejoin="round">
        <path d={FRONT} />
        <path d="M799.500 570L1110 444.500 1082 696.500 771 821.500M799.500 570L771 821.500" />
        <path d="M618 470L925 345.500Q940 339 958 338C1023 336 1079 374 1110 444.500" strokeWidth="1.100" />
      </g>
      <path d="M678 632L984 508.500" stroke="#2a2ad8" strokeWidth="1.200" strokeDasharray="10 6 3 6" />
      <g stroke="#1212e0" fill="#1212e0">
        <path d="M816.500 720L819 697M812 720.500h9M816.500 716v9M813 717l7 7M820 717l-7 7" strokeWidth="1.200" />
        <path d="M819.500 691l3 8h-6zM825 717l-6 1 2 4z" />
      </g>
      <g strokeWidth="4">
        <path d="M331 887l2-20" stroke="#1f7a2c" />
        <path d="M333.500 860l5 10h-10z" fill="#1f7a2c" />
        <path d="M331 888l10-4" stroke="#8e1b1b" />
        <circle cx="343" cy="884" r="4" fill="#c22" />
        <path d="M331 888l16 5" stroke="#1a1aa0" />
        <path d="M356 895l-11 3 2-9z" fill="#1a1ad0" />
      </g>
      <g fontSize="10" fontFamily="Open Sans, sans-serif">
        <text x="331" y="858" fill="#333">Y</text>
        <text x="346" y="882" fill="#c22">X</text>
        <text x="354" y="902" fill="#1a1ad0">Z</text>
      </g>
    </svg>
  );
}

const HEADS_UP = ["hZoomFit", "hZoomArea", "hPrev", "hSection", "hOrient>", "hStyle>", "hGlasses>", "hBall", "hScene>", "hMonitor>"];
const TASK_TABS = ["home", "library", "folder", "palette", "hBall", "options", "forum"];

function Viewport() {
  return (
    <main className="flex-1 min-w-0 relative bg-white border-b border-[#111] overflow-hidden">
      <Model />
      <div className="absolute top-1 inset-x-0 flex items-center justify-center">
        {HEADS_UP.map((item) => {
          const name = item.replace(">", "");
          return (
            <div key={name} className="flex">
              <Tool name={name} className="w-[23px] h-5" />
              {item.endsWith(">") && <MenuButton name={name} dim className="w-3.5 h-5" />}
            </div>
          );
        })}
      </div>
      <div className="absolute top-1 right-1 flex">
        {["paneLeft", "paneRight", "winMin", "winRestore", "winClose"].map((n) => <Tool key={n} name={n} className="w-[23px] h-5" />)}
      </div>
      <div className="absolute top-[60px] right-0 w-5 flex flex-col border-l-2 border-t-2 border-[#222]">
        {TASK_TABS.map((n) => (
          <button key={n} type="button" aria-label={n} className={`h-6 flex items-center pl-0.5 border-b-2 border-[#222] overflow-hidden ${n === "hBall" ? "bg-[#eceef0]" : "bg-[#a9acaf]"}`}>
            <Icon name={n} />
          </button>
        ))}
      </div>
    </main>
  );
}

function SheetTabs() {
  return (
    <nav className="h-3.5 shrink-0 flex bg-[#e1e5e9] text-[11px] leading-3 pl-[27px]">
      <div className="flex w-[66px] bg-[#a7aaae]">
        {["M4 1v6M10 1L6 4l4 3z", "M9 1L5 4l4 3z", "M5 1l4 3-4 3z", "M10 1v6M4 1l4 3-4 3z"].map((d) => (
          <button key={d} type="button" aria-label="Scroll tabs" className="flex-1 border-r border-[#8a8d90] flex items-center justify-center">
            <svg viewBox="0 0 14 8" className="w-3.5 h-2"><path d={d} fill="#85888b" stroke="#85888b" /></svg>
          </button>
        ))}
      </div>
      <button type="button" className="w-[57px] border-x-2 border-b border-[#222] bg-[#eceef0] font-bold">Model</button>
      <button type="button" className="w-[67px] border-r-2 border-b border-[#222] bg-[#a9acaf]">3D Views</button>
      <button type="button" className="w-[105px] border-r-2 border-b border-[#222] bg-[#a9acaf] pr-1">Motion Study 1</button>
    </nav>
  );
}

// the bar runs 4px past the bottom edge of the window
function TaskBar() {
  return (
    <footer className="h-10 -mb-1 shrink-0 flex items-center bg-[#1b1c22] text-white text-[11px]">
      <button type="button" aria-label="Start" className="w-12 h-full flex items-center justify-center shrink-0"><Icon name="winLogo" /></button>
      <label className="w-[343px] h-full shrink-0 flex items-center bg-[#f0f0f0] pl-3">
        <Icon name="lens" className="size-4" />
        <input aria-label="Type here to search" placeholder="Type here to search" className="flex-1 bg-transparent pl-3 text-sm text-[#222] placeholder:text-[#444] outline-none" />
      </label>
      <button type="button" aria-label="Task view" className="w-[49px] h-full flex items-center justify-center"><Icon name="taskview" /></button>
      <button type="button" aria-label="Chrome" className="w-[54px] h-full flex items-center justify-center"><Icon name="chrome" className="size-[22px]" /></button>
      <button type="button" aria-label="Pencils" className="w-[45px] h-full flex items-center justify-center"><Icon name="pencils" className="size-6" /></button>
      <button type="button" className="w-[163px] h-full flex items-center gap-2 pl-3"><Icon name="winFolder" className="size-5" />Shelter</button>
      <button type="button" className="w-[160px] h-full flex items-center gap-1 pl-2.5 bg-[#4a4a50] whitespace-nowrap"><Icon name="solid" className="size-6" />SOLIDWORKS Educ...</button>
      <button type="button" className="w-[160px] h-full flex items-center gap-1 pl-3 whitespace-nowrap"><Icon name="chromeUser" className="size-[23px]" />Shelter Progress 1 -...</button>
      <div className="ml-auto h-full flex items-center">
        <button type="button" aria-label="News" className="w-12"><Icon name="news" className="size-6 mx-auto" /></button>
        {["chrome", "pdm", "cloud", "autodesk", "sync", "device", "shield", "spinner", "mute"].map((n) => (
          <button key={n} type="button" aria-label={n} className="w-6 flex justify-center"><Icon name={n} className="size-[15px]" /></button>
        ))}
        <span className="w-[38px] text-center">ENG</span>
        <time className="w-16 text-center leading-[18px]">10:29 AM<br />9/26/2022</time>
        <button type="button" aria-label="Notifications" className="w-[42px] flex justify-center mr-[5px]"><Icon name="bell" /></button>
      </div>
    </footer>
  );
}

export default function App() {
  return (
    <div className="h-screen flex flex-col overflow-hidden bg-[#d6dadd] text-[#111] font-['Open_Sans',sans-serif]">
      <TitleBar />
      <div className="h-7 shrink-0 flex items-center gap-[5px] pl-1.5">
        <Grip />
        <div className="flex pl-0.5"><ToolGroup items={VIEW_BAR_A} /></div>
        <Edge />
        <div className="w-1.5" />
        <Edge />
        <Grip />
        <div className="flex"><ToolGroup items={VIEW_BAR_B} /></div>
        <Edge />
        <div className="w-3.5" />
        <Edge />
        <Grip />
        <div className="flex"><ToolGroup items={VIEW_BAR_C} /></div>
        <Edge />
      </div>
      <div className="flex-1 min-h-0 flex">
        <div className="w-[45px] shrink-0">
          <div className="border-r border-b border-[#9c9fa2] pt-1.5 pb-1.5">
            <div className="ml-1 w-9.5 mb-1.5 border-t-2 border-dotted border-[#44474a]" />
            <ToolColumn items={FEATURES} iconWidth="w-7" />
          </div>
        </div>
        <div className="w-11 shrink-0">
          <div className="border-b border-[#9c9fa2] pt-1.5 pb-1.5">
            <div className="ml-1 w-9.5 mb-1.5 border-t-2 border-dotted border-[#44474a]" />
            <ToolColumn items={SKETCH} iconWidth="w-[30px]" />
          </div>
        </div>
        <div className="flex-1 min-w-0 flex flex-col">
          <div className="flex-1 min-h-0 flex">
            <FeatureTree />
            <Viewport />
          </div>
          <SheetTabs />
        </div>
      </div>
      <div className="h-[33px] shrink-0 flex items-center gap-[5px] pl-1.5 border-b-2 border-[#111]">
        <Grip />
        <div className="flex pl-0.5"><ToolGroup items={SHEET_BAR} /></div>
        <Edge />
        <div className="w-[22px]" />
        <Edge />
        <Grip />
        <div className="flex"><ToolGroup items={SURFACE_BAR} /></div>
        <Edge />
        <div className="w-2.5" />
        <Edge />
        <Grip />
        <div className="flex"><ToolGroup items={CURVE_BAR} /></div>
        <Edge />
      </div>
      <div className="h-[18px] shrink-0 flex items-center pl-0.5 text-[11px]">
        <span>SOLIDWORKS Education Edition - Instructional Use Only</span>
        <span className="ml-auto">Editing Part</span>
        <button type="button" aria-label="Help" className="ml-10"><Icon name="help" className="size-3.5" /></button>
        <button type="button" aria-label="Tags" className="ml-13 pl-1.5 pr-0.5"><Icon name="tag" /></button>
      </div>
      <TaskBar />
    </div>
  );
}
